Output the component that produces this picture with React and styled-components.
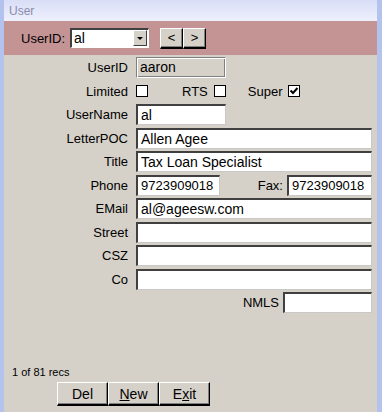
import React from 'react'
import styled, { createGlobalStyle } from 'styled-components';

const Global = createGlobalStyle`
body{
    margin:0;
    font-family:"Liberation Sans", Arial, sans-serif;
    font-size:13px;
    color:#000;
}
`;

const Frame = styled.div`
display:flex;
flex-direction:column;
height:100vh;
box-sizing:border-box;
border-left:4px solid #b3c3ee;
border-right:5px solid #b3c3ee;
background:#d5d1c9;
`;

const TitleBar = styled.div`
height:21px;
line-height:23px;
padding-left:5px;
font-size:12px;
color:#8a8aaa;
background:linear-gradient(#d9def7, #eef0fc);
`;

const Toolbar = styled.div`
height:34px;
display:flex;
align-items:center;
padding-left:17px;
background:#c49394;
`;

const ToolLabel = styled.span`
margin-right:5px;
`;

const Combo = styled.div`
width:79px;
height:20px;
box-sizing:border-box;
display:flex;
align-items:stretch;
background:#fff;
border-top:2px solid #404040;
border-left:2px solid #404040;
border-right:1px solid #fff;
border-bottom:1px solid #fff;
margin-right:11px;
span{
    flex:1;
    padding-left:2px;
    line-height:17px;
    font-size:14px;
}
`;

const DropBtn = styled.div`
width:14px;
box-sizing:border-box;
margin:0 1px 1px 0;
background:#d5d1c9;
border-top:1px solid #fff;
border-left:1px solid #fff;
border-right:1px solid #404040;
border-bottom:1px solid #404040;
display:flex;
align-items:center;
justify-content:center;
&::after{
    content:'';
    border-left:3px solid transparent;
    border-right:3px solid transparent;
    border-top:3px solid #000;
}
`;

const RaisedButton = styled.button`
box-sizing:border-box;
width:${p => p.$w}px;
height:${p => p.$h}px;
padding:0;
margin:0;
background:#d5d1c9;
font-family:"Liberation Sans", Arial, sans-serif;
font-size:${p => p.$fs || 14}px;
color:#000;
border-top:1px solid #fff;
border-left:1px solid #fff;
border-right:1px solid #000;
border-bottom:2px solid #000;
box-shadow:inset -1px -1px #808080;
u{
    text-decoration:underline;
}
`;

const Form = styled.div`
flex:1;
display:grid;
grid-template-columns:124px 236px;
column-gap:8px;
grid-auto-rows:23.5px;
align-content:start;
padding-top:1px;
`;

const Label = styled.div`
text-align:right;
align-self:center;
white-space:nowrap;
`;

const Field = styled.div`
display:flex;
align-items:center;
`;

const Input = styled.div`
box-sizing:border-box;
height:21px;
width:${p => p.$w ? p.$w + 'px' : '100%'};
flex:${p => p.$w ? 'none' : '1'};
padding-left:3px;
line-height:18px;
font-size:${p => p.$fs || 14}px;
white-space:nowrap;
overflow:hidden;
background:${p => p.$readonly ? '#d5d1c9' : '#fff'};
border-top:${p => p.$readonly ? '1px solid #808080' : '2px solid #404040'};
border-left:${p => p.$readonly ? '1px solid #808080' : '2px solid #404040'};
border-right:${p => p.$readonly ? '1px solid #fff' : '1px solid #c8c8c8'};
border-bottom:${p => p.$readonly ? '1px solid #fff' : '1px solid #c8c8c8'};
box-shadow:${p => p.$readonly ? 'inset 1px 1px #fff, inset -1px -1px #808080' : 'none'};
`;

const Check = styled.span`
box-sizing:border-box;
width:12px;
height:12px;
background:#fff;
border:1px solid #000;
display:inline-flex;
align-items:center;
justify-content:center;
margin-right:${p => p.$mr || 0}px;
`;

const InlineLabel = styled.span`
margin-right:${p => p.$mr || 6}px;
`;

const Spacer = styled.div`
flex:1;
text-align:right;
padding-right:4px;
`;

const Footer = styled.div`
padding-bottom:6px;
`;

const Recs = styled.div`
font-size:11px;
padding-left:8px;
margin-bottom:4px;
`;

const ButtonRow = styled.div`
display:flex;
padding-left:53px;
`;

function Tick() {
    return (
        <svg width="10" height="10" viewBox="0 0 10 10">
            <path d="M1.5 4.5 L4 7 L8.5 2" fill="none" stroke="#000" strokeWidth="2" />
        </svg>
    )
}

const rows = [
    ['UserName', 'al', 90],
    ['LetterPOC', 'Allen Agee'],
    ['Title', 'Tax Loan Specialist'],
];

const rows2 = [
    ['EMail', 'al@ageesw.com'],
    ['Street', ''],
    ['CSZ', ''],
    ['Co', ''],
];

function App() {
    return (
        <Frame>
            <Global />
            <TitleBar>User</TitleBar>
            <Toolbar>
                <ToolLabel>UserID:</ToolLabel>
                <Combo>
                    <span>al</span>
                    <DropBtn />
                </Combo>
                <RaisedButton $w={23} $h={21} $fs={13}>&lt;</RaisedButton>
                <RaisedButton $w={23} $h={21} $fs={13}>&gt;</RaisedButton>
            </Toolbar>
            <Form>
                <Label>UserID</Label>
                <Field><Input $w={90} $readonly>aaron</Input></Field>

                <Label>Limited</Label>
                <Field>
                    <Check $mr={34} />
                    <InlineLabel>RTS</InlineLabel>
                    <Check $mr={22} />
                    <InlineLabel>Super</InlineLabel>
                    <Check><Tick /></Check>
                </Field>

                {rows.map(([l, v, w]) => (
                    <React.Fragment key={l}>
                        <Label>{l}</Label>
                        <Field><Input $w={w}>{v}</Input></Field>
                    </React.Fragment>
                ))}

                <Label>Phone</Label>
                <Field>
                    <Input $w={84} $fs={13}>9723909018</Input>
                    <Spacer>Fax:</Spacer>
                    <Input $w={85} $fs={13}>9723909018</Input>
                </Field>

                {rows2.map(([l, v]) => (
                    <React.Fragment key={l}>
                        <Label>{l}</Label>
                        <Field><Input>{v}</Input></Field>
                    </React.Fragment>
                ))}

                <Label />
                <Field>
                    <Spacer>NMLS</Spacer>
                    <Input $w={89}></Input>
                </Field>
            </Form>
            <Footer>
                <Recs>1 of 81 recs</Recs>
                <ButtonRow>
                    <RaisedButton $w={51} $h={24}>Del</RaisedButton>
                    <RaisedButton $w={51} $h={24}><u>N</u>ew</RaisedButton>
                    <RaisedButton $w={51} $h={24}>E<u>x</u>it</RaisedButton>
                </ButtonRow>
            </Footer>
        </Frame>
    )
}

export default App
